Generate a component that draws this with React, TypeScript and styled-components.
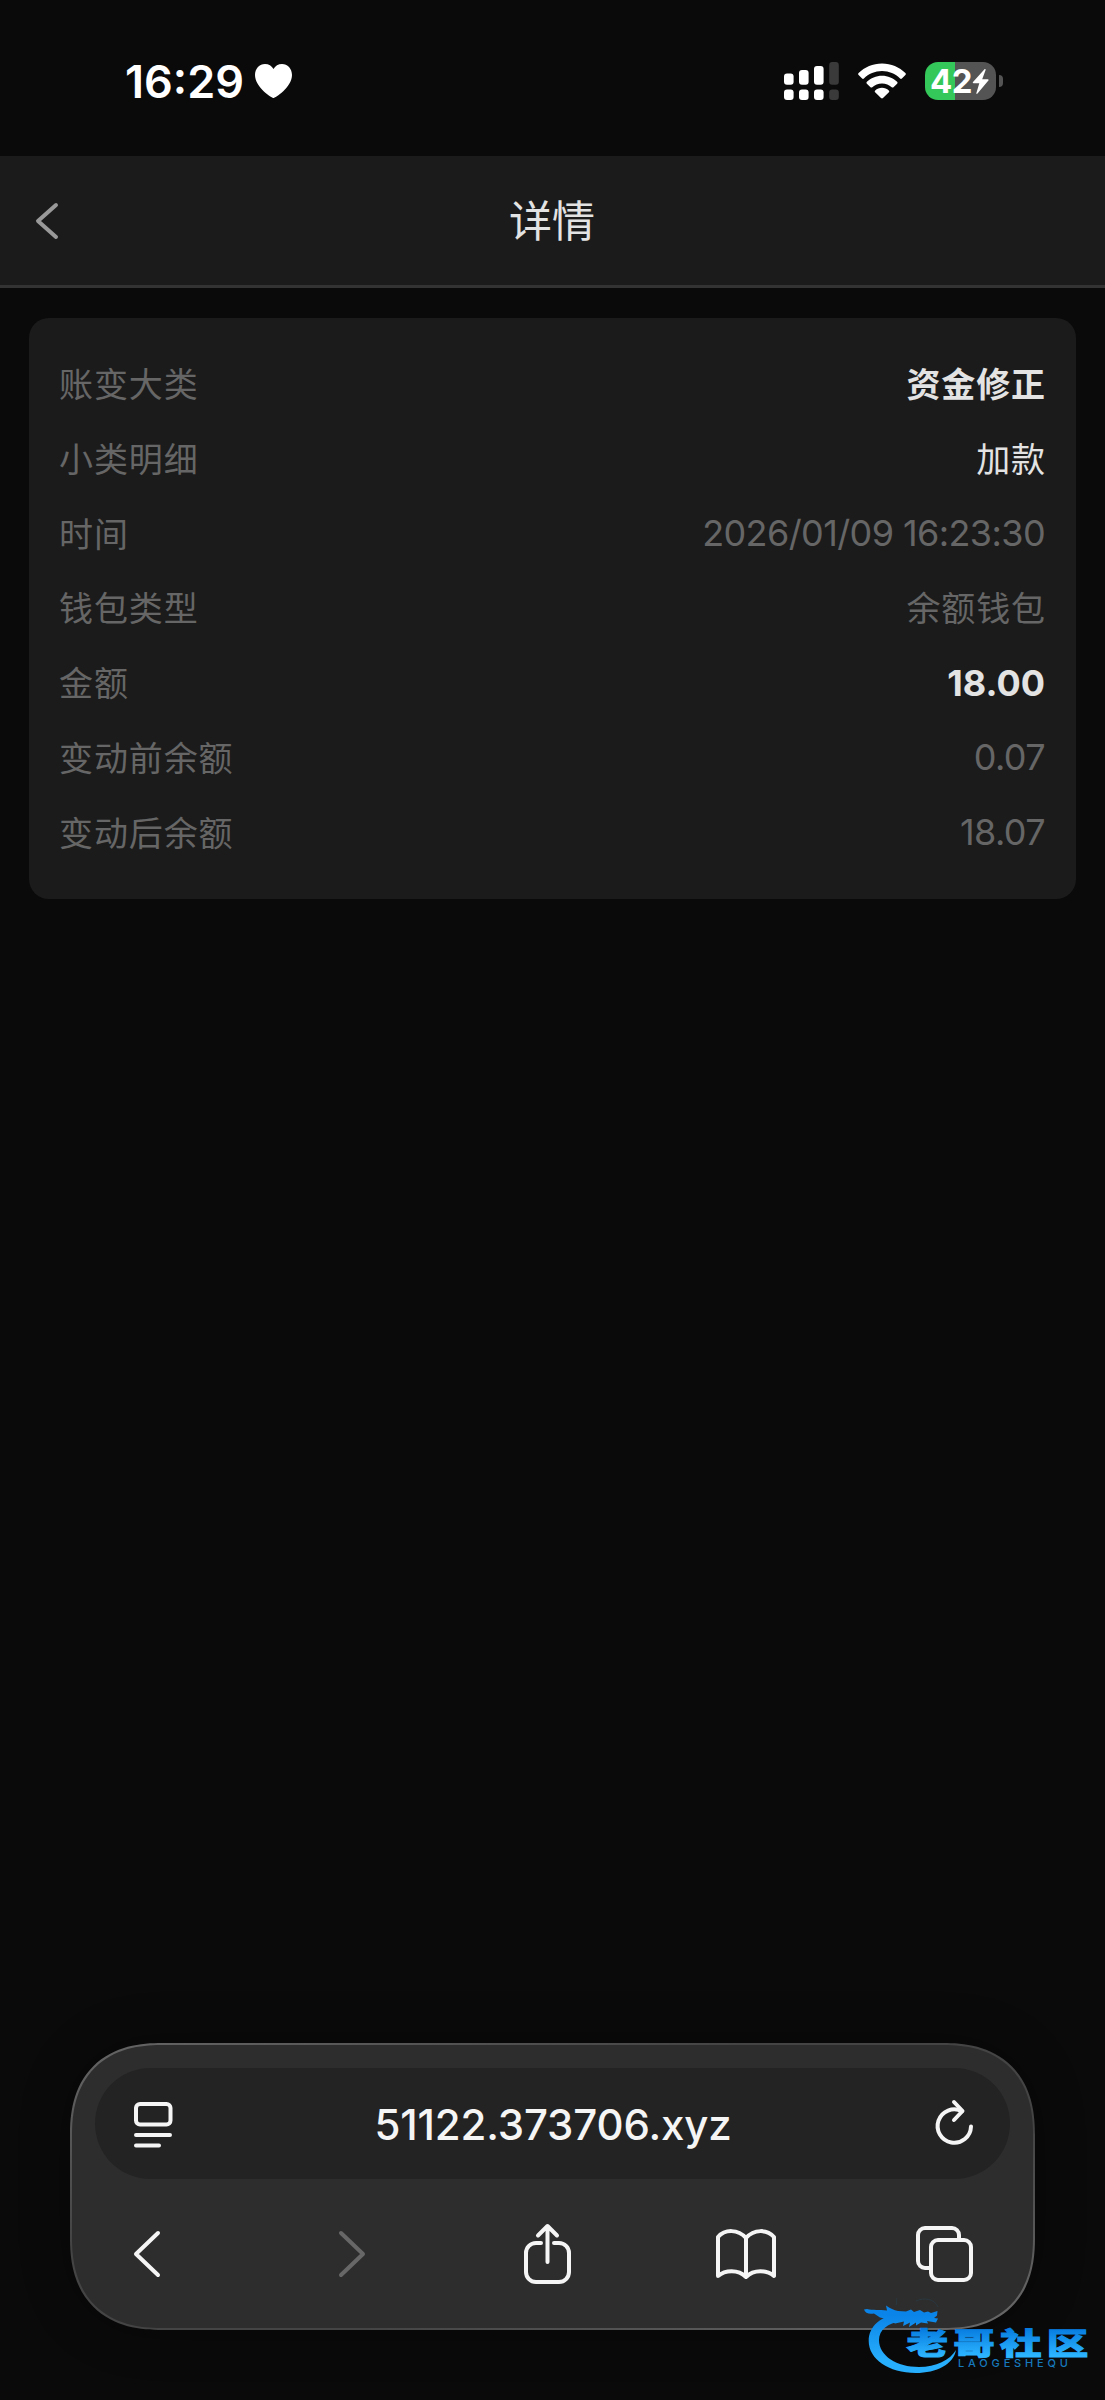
import styled, { createGlobalStyle } from "styled-components";

const GlobalStyle = createGlobalStyle`
  * {
    box-sizing: border-box;
  }
  body {
    margin: 0;
    background-color: #0a0a0a;
    font-family: Inter, "Noto Sans CJK SC", sans-serif;
  }
`;

const Screen = styled.div`
  position: relative;
  width: 1105px;
  height: 2400px;
  display: flex;
  flex-direction: column;
  overflow: hidden;
  background-color: #0a0a0a;
`;

const StatusBar = styled.div`
  height: 156px;
  padding: 6px 102px 0 125px;
  display: flex;
  justify-content: space-between;
  align-items: center;
  color: #fff;
`;

const Clock = styled.div`
  display: flex;
  align-items: center;
  gap: 11px;
  font-size: 45px;
  font-weight: 600;
`;

const StatusIcons = styled.div`
  display: flex;
  align-items: center;
  gap: 19px;
`;

const Battery = styled.div`
  display: flex;
  align-items: center;
  gap: 3px;
`;

const BatteryBody = styled.div<{ $level: number }>`
  width: 71px;
  height: 38px;
  padding-left: 5px;
  border-radius: 13px;
  display: flex;
  align-items: center;
  background: linear-gradient(
    to right,
    #34c759 ${(props) => props.$level}%,
    #545454 ${(props) => props.$level}%
  );
  font-size: 33px;
  font-weight: 700;
  letter-spacing: -0.5px;
`;

const BatteryTip = styled.div`
  width: 4px;
  height: 12px;
  border-radius: 0 5px 5px 0;
  background-color: #545454;
`;

const NavBar = styled.div`
  height: 132px;
  padding: 0 36px;
  display: grid;
  grid-template-columns: 60px 1fr 60px;
  align-items: center;
  background-color: #1b1b1b;
  border-bottom: 3px solid #333;
`;

const Title = styled.h1`
  margin: 0;
  padding: 0 1px 5px 0;
  font-size: 43px;
  font-weight: 400;
  text-align: center;
  color: #e3e3e3;
`;

const Card = styled.div`
  margin: 30px 29px 0;
  height: 581px;
  padding: 29px 30px;
  border-radius: 20px;
  display: grid;
  grid-template-rows: repeat(7, 1fr);
  background-color: #1b1b1b;
`;

const Row = styled.div`
  display: flex;
  justify-content: space-between;
  align-items: center;
  font-size: 34px;
  letter-spacing: 0.9px;
`;

const Label = styled.span`
  padding-bottom: 3px;
  color: #666;
`;

const Value = styled.span<{ $tone: "strong" | "light" | "muted" }>`
  padding-bottom: 3px;
  color: ${(props) => (props.$tone === "muted" ? "#666" : "#e3e3e3")};
  font-weight: ${(props) => (props.$tone === "strong" ? 700 : 400)};
`;

const NumberValue = styled(Value)`
  padding: 0 1px 1px 0;
  font-size: 36px;
  letter-spacing: ${(props) => (props.$tone === "strong" ? "0" : "-0.6px")};
`;

const Toolbar = styled.div`
  margin: auto 70px 70px;
  height: 287px;
  padding: 23px;
  border: 2px solid transparent;
  border-radius: 78px;
  background: linear-gradient(#2d2d2d, #2d2d2d) padding-box,
    linear-gradient(to bottom right, #666, #444 35%, #444 65%, #6a6a6a)
      border-box;
  box-shadow: 0 0 50px rgba(0, 0, 0, 0.3);

  @supports (corner-shape: superellipse(1.25)) {
    border-radius: 92px;
    corner-shape: superellipse(1.25);
  }
`;

const AddressBar = styled.div`
  height: 111px;
  padding: 1px 37px 0 39px;
  border-radius: 56px;
  display: flex;
  justify-content: space-between;
  align-items: center;
  background-color: #232323;
`;

const Address = styled.span`
  padding-right: 2px;
  font-size: 42px;
  font-weight: 500;
  letter-spacing: -0.15px;
  color: #f5f5f5;
`;

const Actions = styled.div`
  height: 150px;
  padding: 0 38px 0 28px;
  display: flex;
  justify-content: space-between;
  align-items: center;
`;

const Action = styled.div<{ $shift?: number }>`
  width: 56px;
  display: flex;
  justify-content: center;
  padding-left: ${(props) => Math.max(props.$shift || 0, 0)}px;
  padding-right: ${(props) => Math.max(-(props.$shift || 0), 0)}px;
`;

const Icon = styled.svg<{ $color?: string }>`
  display: block;
  flex-shrink: 0;
  overflow: visible;
  fill: none;
  stroke: ${(props) => props.$color || "#f5f5f5"};
  stroke-width: 4;
  stroke-linecap: round;
  stroke-linejoin: round;
`;

const Glyph = styled.svg`
  display: block;
  flex-shrink: 0;
  fill: #fff;
`;

const Watermark = styled.svg`
  position: absolute;
  left: 860px;
  top: 2295px;
`;

type Detail = {
  label: string;
  value: string;
  tone: "strong" | "light" | "muted";
  numeric?: boolean;
};

const details: Detail[] = [
  { label: "账变大类", value: "资金修正", tone: "strong" },
  { label: "小类明细", value: "加款", tone: "light" },
  { label: "时间", value: "2026/01/09 16:23:30", tone: "muted", numeric: true },
  { label: "钱包类型", value: "余额钱包", tone: "muted" },
  { label: "金额", value: "18.00", tone: "strong", numeric: true },
  { label: "变动前余额", value: "0.07", tone: "muted", numeric: true },
  { label: "变动后余额", value: "18.07", tone: "muted", numeric: true },
];

const bars = [
  { x: 0, top: 11.5 },
  { x: 15, top: 8 },
  { x: 30, top: 4 },
  { x: 45.2, top: 0 },
];

function Signal() {
  return (
    <Glyph width="55" height="38">
      {bars.map((bar, i) => (
        <g key={bar.x} fill={i === 3 ? "#3a3a3a" : "#fff"}>
          <rect x={bar.x} y={bar.top} width="9.6" height={22.7 - bar.top} rx="3" />
          <rect x={bar.x} y="27.5" width="9.6" height="10.5" rx="3" />
        </g>
      ))}
    </Glyph>
  );
}

function Wifi() {
  return (
    <Glyph width="48" height="36" viewBox="0 0 48 36">
      <path d="M24 0.5c9.2 0 17.4 3.7 23.4 9.6.6.6.6 1.3 0 1.9l-3.5 3.5c-.5.5-1.3.5-1.8 0C37.4 10.9 31 8.1 24 8.1S10.6 10.9 5.9 15.5c-.5.5-1.3.5-1.8 0L.6 12c-.6-.6-.6-1.3 0-1.9C6.6 4.2 14.8.5 24 .5z" />
      <path d="M24 12.7c5.9 0 11.2 2.3 15.1 6.1.6.6.6 1.3 0 1.9l-3.6 3.5c-.5.5-1.2.5-1.8 0-2.5-2.4-5.9-3.8-9.7-3.8s-7.2 1.4-9.7 3.8c-.6.5-1.3.5-1.8 0l-3.6-3.5c-.6-.6-.6-1.3 0-1.9C12.8 15 18.1 12.7 24 12.7z" />
      <path d="M24 24.8c2.6 0 5 1 6.8 2.6.6.5.6 1.3.1 1.8l-5.9 5.9c-.6.6-1.4.6-2 0l-5.9-5.9c-.5-.5-.5-1.3.1-1.8 1.8-1.6 4.2-2.6 6.8-2.6z" />
    </Glyph>
  );
}

function CommunityLogo() {
  return (
    <Watermark width="240" height="90" viewBox="0 0 240 90">
      <defs>
        <linearGradient id="ring" x1="0" y1="0" x2="0" y2="80" gradientUnits="userSpaceOnUse">
          <stop offset="0.25" stopColor="#0a84e8" />
          <stop offset="0.8" stopColor="#27aefc" />
        </linearGradient>
        <linearGradient id="name" x1="0" y1="-26" x2="0" y2="2" gradientUnits="userSpaceOnUse">
          <stop offset="0" stopColor="#067be0" />
          <stop offset="1" stopColor="#2cb4ff" />
        </linearGradient>
      </defs>
      <g fill="url(#ring)">
        <path d="M40 18C21 21 8.7 31 8.7 46c0 18 20 32 47 32 21 0 38-9 40.3-23-6 10-20 17-37 17-22 0-40-11-40-27 0-10 9-17 22-19z" />
        <path d="M7 14c6 1.500 12 .5 20 1.500l-1-5c4 3 8 4.500 12 5.500l8 .5 5-2 3 2.500 6-2 4 2.500 4-1 3 1.500 6.500-2-.5 4.500-3 2.500 4 .5-2 4-9-1.500 1 2.500-7-1-5 3 0-3-7 4.500 1-4.500-7 3.500 1-4.500-9 2-6-4-9-2-6-4c-5 1-9-.5-10-4z" />
      </g>
      <path
        d="M36 10c2-3-1-5 1-7M56 6c8-4 19-2 22 6"
        fill="none"
        stroke="#22506b"
        strokeWidth="1"
        opacity="0.3"
      />
      <text
        transform="translate(46.5 58.5) scale(1.34 0.97)"
        fill="url(#name)"
        stroke="url(#name)"
        strokeWidth="1"
        fontFamily="'Noto Sans CJK SC', sans-serif"
        fontSize="31"
        fontWeight="900"
        letterSpacing="3.9"
      >
        老哥社区
      </text>
      <text
        x="98"
        y="72"
        fill="#1779bd"
        fontFamily="Inter, sans-serif"
        fontSize="11"
        fontWeight="500"
        textLength="110"
      >
        LAOGESHEQU
      </text>
    </Watermark>
  );
}

function App() {
  return (
    <Screen>
      <GlobalStyle />
      <StatusBar>
        <Clock>
          16:29
          <Glyph width="37" height="34" viewBox="0 0 37 34">
            <path d="M18.5 34C17 34 0 23.5 0 11 0 4.5 4.5 0 10 0c3.7 0 6.8 1.9 8.5 5C20.2 1.9 23.3 0 27 0c5.5 0 10 4.5 10 11 0 12.5-17 23-18.5 23z" />
          </Glyph>
        </Clock>
        <StatusIcons>
          <Signal />
          <Wifi />
          <Battery>
            <BatteryBody $level={42}>
              42
              <Glyph width="17" height="25" viewBox="0 0 17 25">
                <path d="M12.5.3 1 13c-.5.6-.2 1.3.6 1.3h5.7L4.4 24c-.3.9.5 1.2 1.1.6L16.400 11.600c.5-.6.2-1.3-.6-1.3h-5.600L13.600 1c.3-.9-.5-1.3-1.100-.7z" />
              </Glyph>
            </BatteryBody>
            <BatteryTip />
          </Battery>
        </StatusIcons>
      </StatusBar>

      <NavBar>
        <Icon width="22" height="36" $color="#999">
          <path d="M20 2 2 18l18 16" />
        </Icon>
        <Title>详情</Title>
      </NavBar>

      <Card>
        {details.map((item) => (
          <Row key={item.label}>
            <Label>{item.label}</Label>
            {item.numeric ? (
              <NumberValue $tone={item.tone}>{item.value}</NumberValue>
            ) : (
              <Value $tone={item.tone}>{item.value}</Value>
            )}
          </Row>
        ))}
      </Card>

      <Toolbar>
        <AddressBar>
          <Icon width="38" height="46">
            <rect x="2" y="3" width="34.5" height="20.5" rx="4" />
            <path d="M2 34h34M2 44.5h23" />
          </Icon>
          <Address>51122.373706.xyz</Address>
          <Icon width="37" height="46">
            <path d="M26 10.2a16.7 16.7 0 1 0 9 15.3" />
            <path d="M18 1l8.5 9-8.5 9" />
          </Icon>
        </AddressBar>
        <Actions>
          <Action $shift={-8}>
            <Icon width="26" height="46">
              <path d="M24 2 2 23l22 21" />
            </Icon>
          </Action>
          <Action $shift={6}>
            <Icon width="26" height="46" $color="#676767">
              <path d="M2 2l22 21L2 44" />
            </Icon>
          </Action>
          <Action>
            <Icon width="47" height="60">
              <path d="M17 19h-5a10 10 0 0 0-10 10v19a10 10 0 0 0 10 10h23a10 10 0 0 0 10-10V29a10 10 0 0 0-10-10h-5" />
              <path d="M23.5 38V2M14 11.5 23.5 2l9.5 9.5" />
            </Icon>
          </Action>
          <Action>
            <Icon width="60" height="50">
              <path d="M30 9C22 0 9 0 2 8v39c7-6 20-7 28 1 8-8 21-7 28-1V8C51 0 38 0 30 9zv39" />
            </Icon>
          </Action>
          <Action>
            <Icon width="57" height="56">
              <path d="M13 42H9a7 7 0 0 1-7-7V9a7 7 0 0 1 7-7h27a7 7 0 0 1 7 7v4" />
              <rect x="15" y="14" width="40" height="40" rx="7" />
            </Icon>
          </Action>
        </Actions>
      </Toolbar>
      <CommunityLogo />
    </Screen>
  );
}

export default App;
